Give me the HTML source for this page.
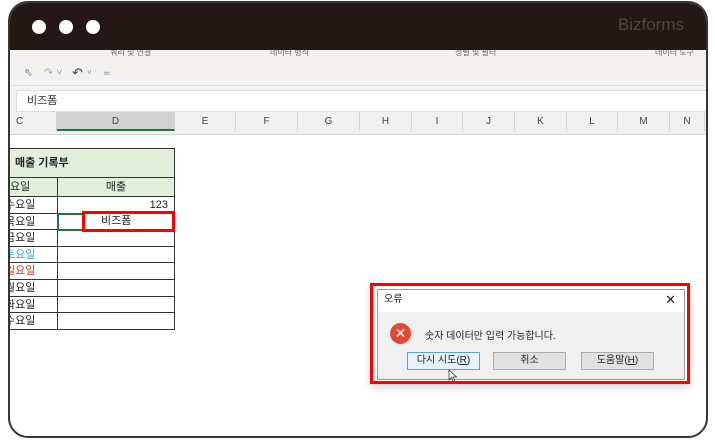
<!DOCTYPE html>
<html><head><meta charset="utf-8"><style>
*{margin:0;padding:0;box-sizing:border-box}
body{width:715px;height:440px;background:#fff;position:relative;overflow:hidden;font-family:"Liberation Sans","Noto Sans CJK KR",sans-serif;font-size:11px;color:#333}
.frame{position:absolute;left:8px;top:1px;width:700px;height:437px;border:2px solid #3a3330;border-radius:20px;overflow:hidden;background:#fff}
.hdr{position:absolute;left:0;top:0;width:100%;height:47px;background:#231815}
.dot{position:absolute;top:17px;width:14px;height:14px;border-radius:50%;background:#fff}
.brand{position:absolute;right:22px;top:12px;font-size:17px;color:#4e4643}
.ab{position:absolute}
.col{position:absolute;top:112px;height:19px;border-right:1px solid #d4d4d4;text-align:center;line-height:19px;font-size:10px;color:#444}
.cell{position:absolute;border:1px solid #333;font-size:11px;color:#222;line-height:16px;overflow:hidden;white-space:nowrap}
.btn{position:absolute;top:352px;height:18px;border:1px solid #adadad;background:#e1e1e1;font-size:10px;text-align:center;line-height:16px;color:#222}
</style></head><body>
<div class="frame">
 <div class="hdr">
  <div class="dot" style="left:22px"></div><div class="dot" style="left:49px"></div><div class="dot" style="left:76px"></div>
  <div class="brand">Bizforms</div>
 </div>
 <div class="ab" style="left:0;top:47px;width:100%;height:10px;background:#f3f2f1;font-size:8px;color:#666;line-height:8px;overflow:hidden">
  <span class="ab" style="left:100px;top:-1px">쿼리 및 연결</span><span class="ab" style="left:260px;top:-1px">데이터 형식</span><span class="ab" style="left:445px;top:-1px">정렬 및 필터</span><span class="ab" style="left:645px;top:-1px">데이터 도구</span>
 </div>
 <div class="ab" style="left:0;top:57px;width:100%;height:26px;background:#f3f2f1;border-bottom:1px solid #e0e0e0;color:#888;font-size:11px;line-height:26px">
  <span class="ab" style="left:14px">⇖</span><span class="ab" style="left:34px;color:#aaa">↷ ˅</span><span class="ab" style="left:62px;color:#444;font-size:13px">↶</span><span class="ab" style="left:77px;font-size:8px">˅</span><span class="ab" style="left:93px;font-size:9px">≂</span>
 </div>
 <div class="ab" style="left:0;top:83px;width:100%;height:28px;background:#f3f2f1"></div>
 <div class="ab" style="left:6px;top:87px;width:700px;height:22px;background:#fff;border:1px solid #ddd;padding-left:10px;line-height:20px;font-size:11px;color:#333">비즈폼</div>
 <div class="ab" style="left:0;top:111px;width:100%;height:21px;background:#f0f0f0;border-bottom:1px solid #d4d4d4"></div>
</div>
<div class="col" style="left:10px;width:47px;text-align:left;padding-left:6px">C</div>
<div class="col" style="left:57px;width:118px;background:#d2d2d2;border-bottom:2px solid #217346">D</div>
<div class="col" style="left:175px;width:61px">E</div>
<div class="col" style="left:236px;width:62px">F</div>
<div class="col" style="left:298px;width:62px">G</div>
<div class="col" style="left:360px;width:52px">H</div>
<div class="col" style="left:412px;width:51px">I</div>
<div class="col" style="left:463px;width:52px">J</div>
<div class="col" style="left:515px;width:52px">K</div>
<div class="col" style="left:567px;width:51px">L</div>
<div class="col" style="left:618px;width:52px">M</div>
<div class="col" style="left:670px;width:35px">N</div>

<div class="cell" style="left:10px;top:148px;width:165px;height:30px;background:#e2efda;font-weight:bold;padding-left:5px;line-height:28px;border-left:none">매출 기록부</div>
<div class="cell" style="left:10px;top:177px;width:48px;height:20px;background:#e2efda;border-left:none;line-height:18px">요일</div>
<div class="cell" style="left:57px;top:177px;width:118px;height:20px;background:#e2efda;text-align:center;line-height:18px">매출</div>
<div id="rows"></div>
<script>
var d=["수요일","목요일","금요일","토요일","일요일","월요일","화요일","수요일"],c=["#222","#222","#222","#3aa0c8","#c0392b","#222","#222","#222"],h="";
for(var i=0;i<8;i++){var t=196+i*16.6;
h+='<div class="cell" style="left:10px;top:'+t+'px;width:48px;height:17.6px;border-left:none;color:'+c[i]+';text-indent:-5px">'+d[i]+'</div>';
h+='<div class="cell" style="left:57px;top:'+t+'px;width:118px;height:17.6px;text-align:right;padding-right:6px">'+(i==0?'123':'')+'</div>';}
document.getElementById('rows').innerHTML=h;
</script>
<div class="ab" style="left:57px;top:213px;width:118px;height:18px;border:2px solid #217346"></div>
<div class="ab" style="left:82px;top:211px;width:93px;height:21px;border:3px solid #f00;font-size:11px;padding-left:16px;line-height:15px;color:#222;background:#fff">비즈폼</div>

<div class="ab" style="left:370px;top:283px;width:320px;height:101px;border:3px solid #f00;background:#fff;box-shadow:0 4px 8px rgba(0,0,0,.15)"></div>
<div class="ab" style="left:377px;top:289px;width:308px;height:91px;border:1px solid #999;background:#f0f0f0"></div>
<div class="ab" style="left:378px;top:290px;width:306px;height:22px;background:#fff;font-size:10px;line-height:20px;padding-left:6px;color:#222">오류<span class="ab" style="right:8px;top:0;font-size:13px">✕</span></div>
<div class="ab" style="left:390px;top:323px;width:21px;height:21px;border-radius:50%;background:#e04a32;color:#fff;text-align:center;line-height:21px;font-size:14px">✕</div>
<div class="ab" style="left:425px;top:327px;font-size:10px;color:#222">숫자 데이터만 입력 가능합니다.</div>
<div class="btn" style="left:407px;width:73px;border-color:#5fa0d0;background:#e5f1fb">다시 시도(<u>R</u>)</div>
<div class="btn" style="left:493px;width:73px">취소</div>
<div class="btn" style="left:581px;width:73px">도움말(<u>H</u>)</div>
<svg class="ab" style="left:448px;top:369px" width="10" height="14"><path d="M1 1 L1 11 L3.5 8.5 L5.5 13 L7 12.3 L5 8 L8.5 8 Z" fill="#fff" stroke="#333" stroke-width="0.8"/></svg>
</body></html>
